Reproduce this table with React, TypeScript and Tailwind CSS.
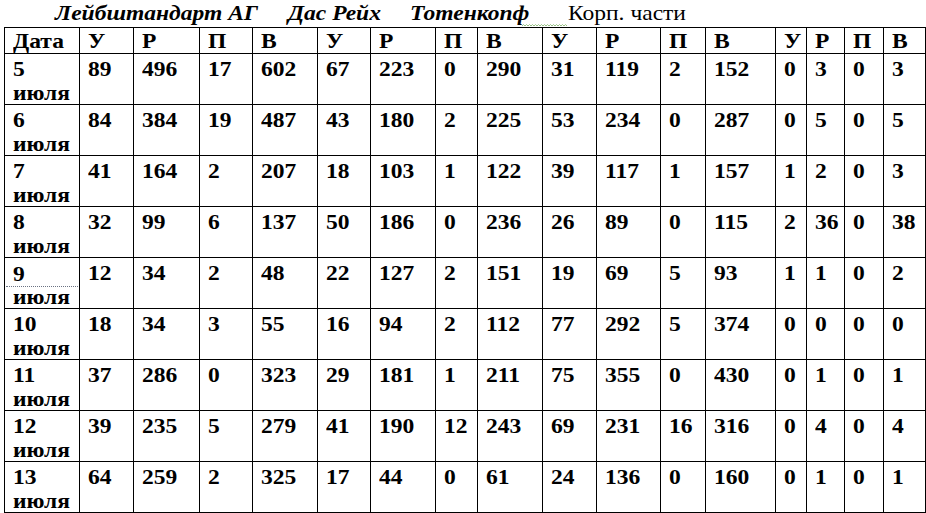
import React from 'react';

const widths = [75, 54, 66, 53, 65, 53, 65, 42, 65, 54, 64, 45, 70, 31, 38, 39, 42];
const widthClass = [
  'w-[75px]', 'w-[54px]', 'w-[66px]', 'w-[53px]', 'w-[65px]', 'w-[53px]', 'w-[65px]', 'w-[42px]',
  'w-[65px]', 'w-[54px]', 'w-[64px]', 'w-[45px]', 'w-[70px]', 'w-[31px]', 'w-[38px]', 'w-[39px]', 'w-[42px]',
];

const header = ['Дата', 'У', 'Р', 'П', 'В', 'У', 'Р', 'П', 'В', 'У', 'Р', 'П', 'В', 'У', 'Р', 'П', 'В'];

const rows: { day: string; values: number[] }[] = [
  { day: '5', values: [89, 496, 17, 602, 67, 223, 0, 290, 31, 119, 2, 152, 0, 3, 0, 3] },
  { day: '6', values: [84, 384, 19, 487, 43, 180, 2, 225, 53, 234, 0, 287, 0, 5, 0, 5] },
  { day: '7', values: [41, 164, 2, 207, 18, 103, 1, 122, 39, 117, 1, 157, 1, 2, 0, 3] },
  { day: '8', values: [32, 99, 6, 137, 50, 186, 0, 236, 26, 89, 0, 115, 2, 36, 0, 38] },
  { day: '9', values: [12, 34, 2, 48, 22, 127, 2, 151, 19, 69, 5, 93, 1, 1, 0, 2] },
  { day: '10', values: [18, 34, 3, 55, 16, 94, 2, 112, 77, 292, 5, 374, 0, 0, 0, 0] },
  { day: '11', values: [37, 286, 0, 323, 29, 181, 1, 211, 75, 355, 0, 430, 0, 1, 0, 1] },
  { day: '12', values: [39, 235, 5, 279, 41, 190, 12, 243, 69, 231, 16, 316, 0, 4, 0, 4] },
  { day: '13', values: [64, 259, 2, 325, 17, 44, 0, 61, 24, 136, 0, 160, 0, 1, 0, 1] },
];

// скан растянут по горизонтали — растягиваем текст так же
function S({ children }: { children: React.ReactNode }) {
  return <span className="inline-block origin-left scale-x-[1.12]">{children}</span>;
}

export default function App() {
  const cell = 'border border-black align-top pl-[8px] pr-0 py-0 overflow-hidden whitespace-nowrap';

  return (
    <div
      className="w-[926px] h-[513px] overflow-hidden bg-white text-black text-[21px] leading-[26px]"
      style={{ fontFamily: '"Liberation Serif", "Times New Roman", serif' }}
    >
      {/* Заголовок */}
      <div className="h-[28px] flex items-start pt-[1px] leading-[24px] text-[21px]">
        <span className="ml-[55px] w-[233px] font-bold italic">
          <S>Лейбштандарт АГ</S>
        </span>
        <span className="w-[122px] font-bold italic">
          <S>Дас Рейх</S>
        </span>
        <span className="w-[112px] font-bold italic">
          <S>Тотенкопф</S>
        </span>
        <span className="w-[46px] h-[27px] flex items-end pb-[1px]">
          <svg width="46" height="3" viewBox="0 0 46 3">
            <polyline
              points="0,2 1.5,0.5 3,2 4.5,0.5 6,2 7.5,0.5 9,2 10.5,0.5 12,2 13.5,0.5 15,2 16.5,0.5 18,2 19.5,0.5 21,2 22.5,0.5 24,2 25.5,0.5 27,2 28.5,0.5 30,2 31.5,0.5 33,2 34.5,0.5 36,2 37.5,0.5 39,2 40.5,0.5 42,2 43.5,0.5 45,2"
              fill="none"
              stroke="#7fb36a"
              strokeWidth="0.8"
            />
          </svg>
        </span>
        <span>
          <S>Корп. части</S>
        </span>
      </div>

      {/* Таблица */}
      <table className="ml-[4px] -mt-[1px] border-collapse table-fixed font-bold w-[921px]">
        <colgroup>
          {widths.map((w, i) => (
            <col key={i} className={widthClass[i]} />
          ))}
        </colgroup>
        <thead>
          <tr className="h-[25px]">
            {header.map((h, i) => (
              <td key={i} className={`${cell} leading-[24px] pt-[1px]`}>
                <S>{h}</S>
              </td>
            ))}
          </tr>
        </thead>
        <tbody>
          {rows.map((r) => (
            <tr key={r.day} className="h-[51px]">
              <td className={cell}>
                {r.day === '9' ? (
                  <div className="leading-[24px] h-[29px] pt-[4px] border-b border-dotted border-gray-500 -ml-[7px] pl-[7px] -mr-[1px]">
                    <S>{r.day}</S>
                  </div>
                ) : (
                  <div className="leading-[25px] h-[29px] pt-[3px]">
                    <S>{r.day}</S>
                  </div>
                )}
                <div className="leading-[21px] h-[21px]">
                  <S>июля</S>
                </div>
              </td>
              {r.values.map((v, i) => (
                <td key={i} className={cell}>
                  <div className="leading-[25px] h-[29px] pt-[3px]">
                    <S>{v}</S>
                  </div>
                </td>
              ))}
            </tr>
          ))}
        </tbody>
      </table>
    </div>
  );
}
